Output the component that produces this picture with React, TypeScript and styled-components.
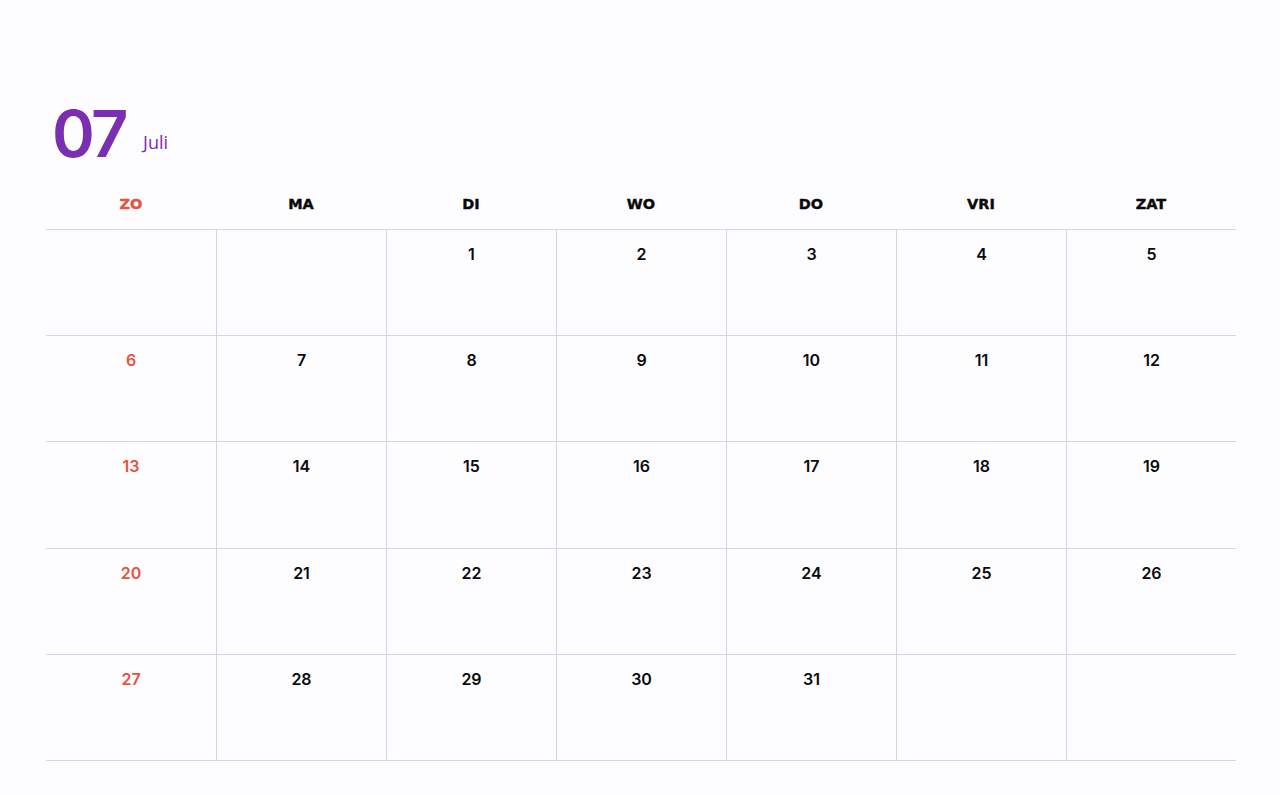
import React from "react";
import styled, { createGlobalStyle } from "styled-components";

const Global = createGlobalStyle`
  html, body { margin: 0; padding: 0; background: #fdfcfe; }
  body { font-family: "Inter", "Noto Sans", sans-serif; }
`;

const Page = styled.div`
  width: 1280px;
  height: 795px;
  box-sizing: border-box;
  padding: 100px 44px 0 46px;
`;

const Title = styled.div`
  display: flex;
  align-items: flex-start;
  gap: 17px;
  padding-left: 6px;
  height: 80px;
`;

const MonthNum = styled.span`
  font-family: "Inter", sans-serif;
  font-weight: 600;
  font-size: 65px;
  line-height: 66px;
  margin-top: 1px;
  color: #7a2eb0;
  letter-spacing: -2.5px;
`;

const MonthName = styled.span`
  font-family: "Open Sans", sans-serif;
  font-weight: 400;
  font-size: 18px;
  line-height: 22px;
  margin-top: 31px;
  color: #7a2eb0;
`;

const Grid = styled.div`
  display: grid;
  grid-template-columns: repeat(7, 170px);
  width: 1190px;
`;

const HeadCell = styled.div<{ $sun?: boolean }>`
  height: 50px;
  box-sizing: border-box;
  border-bottom: 1px solid #d9d5de;
  display: flex;
  align-items: center;
  justify-content: center;
  padding-bottom: 2px;
  font-family: "DejaVu Sans", sans-serif;
  font-weight: 800;
  font-size: 14.5px;
  -webkit-text-stroke: 0.4px currentColor;
  color: ${(p) => (p.$sun ? "#e8523a" : "#0a0a0a")};
`;

const DayCell = styled.div<{ $sun?: boolean; $first?: boolean }>`
  height: 106.2px;
  box-sizing: border-box;
  border-bottom: 1px solid #d9d5de;
  border-left: ${(p) => (p.$first ? "none" : "1px solid #d9d5de")};
  display: flex;
  justify-content: center;
  padding-top: 14px;
  font-family: "Inter", sans-serif;
  font-weight: 600;
  font-size: 16px;
  color: ${(p) => (p.$sun ? "#e8523a" : "#0a0a0a")};
`;

const days = ["ZO", "MA", "DI", "WO", "DO", "VRI", "ZAT"];

export default function App() {
  const cells: (number | null)[] = [null, null];
  for (let i = 1; i <= 31; i++) cells.push(i);
  while (cells.length < 35) cells.push(null);
  return (
    <>
      <Global />
      <Page>
        <Title>
          <MonthNum>07</MonthNum>
          <MonthName>Juli</MonthName>
        </Title>
        <Grid>
          {days.map((d, i) => (
            <HeadCell key={d} $sun={i === 0}>
              {d}
            </HeadCell>
          ))}
          {cells.map((c, i) => (
            <DayCell key={i} $sun={i % 7 === 0} $first={i % 7 === 0}>
              {c ?? ""}
            </DayCell>
          ))}
        </Grid>
      </Page>
    </>
  );
}
